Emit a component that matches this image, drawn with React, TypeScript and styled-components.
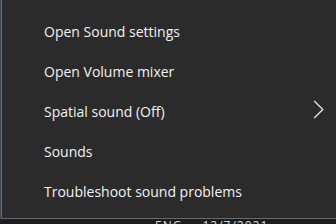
import { FC } from "react";
import styled, { createGlobalStyle } from "styled-components";

const GlobalStyle = createGlobalStyle`
  html, body {
    margin: 0;
    padding: 0;
    background: #1b1d20;
    overflow: hidden;
  }
`;

const Screen = styled.div`
  width: 336px;
  height: 224px;
  display: flex;
  flex-direction: column;
  background: #1b1d20;
  overflow: hidden;
`;

const Desk = styled.div`
  display: flex;
  height: 220px;
  background: #3a4650;
`;

const Menu = styled.div`
  flex: 1;
  margin-left: 1px;
  border-left: 1px solid #6a6a6a;
  border-bottom: 1px solid #6a6a6a;
  background: #2b2b2b;
  padding-top: 11px;
  display: flex;
  flex-direction: column;
`;

const Item = styled.div`
  height: 40px;
  display: flex;
  align-items: center;
  justify-content: space-between;
  padding-left: 42px;
  padding-right: 12px;
  font-family: "Open Sans", "Noto Sans", sans-serif;
  font-size: 14px;
  color: #f2f2f2;
  white-space: nowrap;
`;

const Chevron = styled.svg`
  width: 11px;
  height: 19px;
  margin-top: -3px;
  flex: none;
`;

const Taskbar = styled.div`
  height: 4px;
  overflow: hidden;
  display: flex;
  font-family: "Open Sans", sans-serif;
  font-size: 12px;
  color: #d8d8d8;
  line-height: 12px;
  padding-top: 1px;
`;

const TrayText = styled.span<{ $left: number }>`
  margin-left: ${(p) => p.$left}px;
  letter-spacing: 1px;
`;

type MenuEntry = { label: string; submenu?: boolean };

const entries: MenuEntry[] = [
  { label: "Open Sound settings" },
  { label: "Open Volume mixer" },
  { label: "Spatial sound (Off)", submenu: true },
  { label: "Sounds" },
  { label: "Troubleshoot sound problems" },
];

const MenuRow: FC<MenuEntry> = ({ label, submenu }) => (
  <Item>
    <span>{label}</span>
    {submenu && (
      <Chevron viewBox="0 0 11 19">
        <path d="M1.2 1 L9.8 9.5 L1.2 18" fill="none" stroke="#e6e6e6" strokeWidth="1.3" />
      </Chevron>
    )}
  </Item>
);

export default function App() {
  return (
    <>
      <GlobalStyle />
      <Screen>
        <Desk>
          <Menu>
            {entries.map((e) => (
              <MenuRow key={e.label} {...e} />
            ))}
          </Menu>
        </Desk>
        <Taskbar>
          <TrayText $left={155}>ENG</TrayText>
          <TrayText $left={20}>12/7/2021</TrayText>
        </Taskbar>
      </Screen>
    </>
  );
}
